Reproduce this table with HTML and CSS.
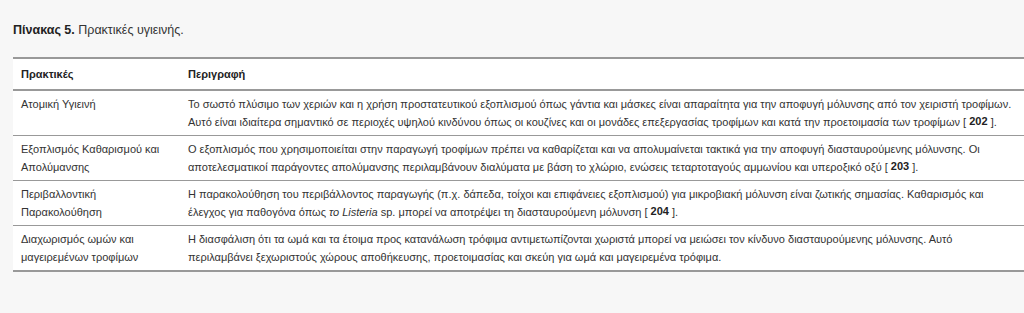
FILE: index.html
```html
<!DOCTYPE html>
<html lang="el">
<head>
<meta charset="utf-8">
<link rel="stylesheet" href="styles.css">
</head>
<body>
<div class="page">
  <p class="caption"><b>Πίνακας 5.</b> Πρακτικές υγιεινής.</p>
  <table class="tbl">
    <colgroup><col class="c1"><col class="c2"></colgroup>
    <thead>
      <tr><th>Πρακτικές</th><th class="desc">Περιγραφή</th></tr>
    </thead>
    <tbody>
      <tr>
        <td>Ατομική Υγιεινή</td>
        <td class="desc">Το σωστό πλύσιμο των χεριών και η χρήση προστατευτικού εξοπλισμού όπως γάντια και μάσκες είναι απαραίτητα για την αποφυγή μόλυνσης από τον χειριστή τροφίμων. Αυτό είναι ιδιαίτερα σημαντικό σε περιοχές υψηλού κινδύνου όπως οι κουζίνες και οι μονάδες επεξεργασίας τροφίμων και κατά την προετοιμασία των τροφίμων [ <span class="ref">202</span> ].</td>
      </tr>
      <tr>
        <td>Εξοπλισμός Καθαρισμού και Απολύμανσης</td>
        <td class="desc">Ο εξοπλισμός που χρησιμοποιείται στην παραγωγή τροφίμων πρέπει να καθαρίζεται και να απολυμαίνεται τακτικά για την αποφυγή διασταυρούμενης μόλυνσης. Οι αποτελεσματικοί παράγοντες απολύμανσης περιλαμβάνουν διαλύματα με βάση το χλώριο, ενώσεις τεταρτοταγούς αμμωνίου και υπεροξικό οξύ [ <span class="ref">203</span> ].</td>
      </tr>
      <tr>
        <td>Περιβαλλοντική Παρακολούθηση</td>
        <td class="desc">Η παρακολούθηση του περιβάλλοντος παραγωγής (π.χ. δάπεδα, τοίχοι και επιφάνειες εξοπλισμού) για μικροβιακή μόλυνση είναι ζωτικής σημασίας. Καθαρισμός και έλεγχος για παθογόνα όπως <i>το Listeria</i> sp. μπορεί να αποτρέψει τη διασταυρούμενη μόλυνση [ <span class="ref">204</span> ].</td>
      </tr>
      <tr>
        <td>Διαχωρισμός ωμών και μαγειρεμένων τροφίμων</td>
        <td class="desc">Η διασφάλιση ότι τα ωμά και τα έτοιμα προς κατανάλωση τρόφιμα αντιμετωπίζονται χωριστά μπορεί να μειώσει τον κίνδυνο διασταυρούμενης μόλυνσης. Αυτό περιλαμβάνει ξεχωριστούς χώρους αποθήκευσης, προετοιμασίας και σκεύη για ωμά και μαγειρεμένα τρόφιμα.</td>
      </tr>
    </tbody>
  </table>
</div>
</body>
</html>
```
FILE: styles.css
```css
html, body {
  margin: 0;
  padding: 0;
  background: #f7f7f7;
  overflow: hidden;
}
body {
  font-family: "Liberation Sans", Arial, sans-serif;
  color: #333;
}
.page {
  padding: 22px 0 0 13px;
}
.caption {
  margin: 0 0 19px 0;
  font-size: 12.5px;
  line-height: 16px;
  color: #333;
}
.caption b {
  color: #222;
}
.tbl {
  width: 1030px;
  border-collapse: collapse;
  background: #fff;
  font-size: 11px;
  line-height: 18px;
  border-top: 2px solid #999;
  border-bottom: 2px solid #999;
}
.c1 { width: 167px; }
.tbl th {
  text-align: left;
  font-weight: bold;
  color: #222;
  padding: 6px 8px;
  border-bottom: 2px solid #999;
}
.tbl td {
  vertical-align: top;
  padding: 4px 8px;
  border-bottom: 1px solid #999;
}
.tbl td.desc {
  padding-right: 27px;
}
.tbl tbody tr:last-child td {
  border-bottom: none;
}
.ref {
  font-weight: bold;
  color: #222;
  position: relative;
  top: -1px;
}
```
